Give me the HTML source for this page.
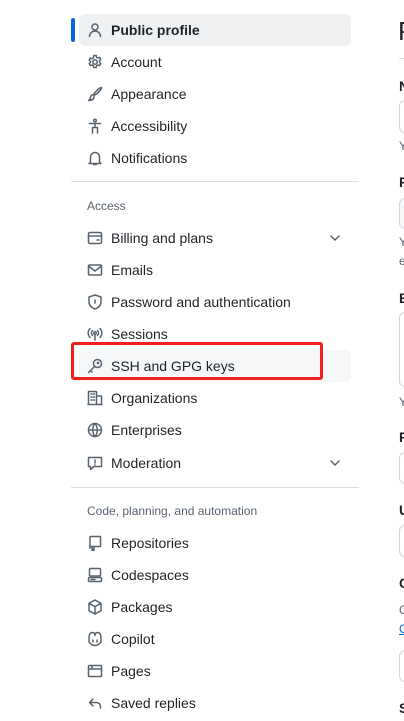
<!DOCTYPE html>
<html><head><meta charset="utf-8">
<style>
*{margin:0;padding:0;box-sizing:border-box}
body{width:404px;height:721px;overflow:hidden;background:#fff;font-family:"Liberation Sans",Arial,sans-serif;color:#1f2328;position:relative}
.item{position:absolute;left:79px;width:272px;height:32px;display:flex;align-items:center;font-size:14px}
.item svg{position:absolute;left:8px;top:8px;width:16px;height:16px;fill:none;stroke:#59636e;stroke-width:1.5;stroke-linecap:round;stroke-linejoin:round}
.item span{position:absolute;left:32px}
.chev{position:absolute;left:250px !important;top:10px !important;width:12px !important;height:12px !important}
.hdr{position:absolute;left:87px;font-size:12px;color:#59636e}
.div{position:absolute;left:71px;width:288px;height:1px;background:#d8dee4}
.r{position:absolute;left:399px;border:1px solid #d1d9e0;border-radius:6px;width:30px}
.l{position:absolute;left:399px;font-size:14px;font-weight:bold}
.s{position:absolute;left:399px;font-size:12px;color:#59636e}
</style></head><body>
<div style="position:absolute;left:71px;top:18px;width:4px;height:24px;background:#0969da;border-radius:2px"></div>
<div class="item" style="top:14px;background:#eef0f2;border-radius:6px;font-weight:bold"><svg viewBox="0 0 16 16"><circle cx="8" cy="5" r="3"/><path d="M2.5 14.5c0-3 2.5-5.5 5.5-5.5s5.5 2.5 5.5 5.5"/></svg><span>Public profile</span></div>
<div class="item" style="top:46px"><svg viewBox="0 0 16 16"><circle cx="8" cy="8" r="2.2"/><path d="M6.8 1.5h2.4l.4 1.8 1.3.7 1.7-.6 1.2 2.1-1.3 1.2v1.6l1.3 1.2-1.2 2.1-1.7-.6-1.3.7-.4 1.8H6.8l-.4-1.8-1.3-.7-1.7.6-1.2-2.1 1.3-1.2V7.4L2.2 6.2l1.2-2.1 1.7.6 1.3-.7z"/></svg><span>Account</span></div>
<div class="item" style="top:78px"><svg viewBox="0 0 16 16"><path d="M14.5 1.5c-2 0-6 4-7.5 6.5l1 1c2.5-1.5 6.5-5.5 6.5-7.5zM6.5 8.5c-2 0-3 1.5-3 3.5 0 1-1 2-2 2.5 3 0 5.5-1 5.5-4z"/></svg><span>Appearance</span></div>
<div class="item" style="top:110px"><svg viewBox="0 0 16 16"><circle cx="8" cy="2.5" r="1.3"/><path d="M2.5 5.5h11M8 5.5v4M5.5 15V9.5h5V15"/></svg><span>Accessibility</span></div>
<div class="item" style="top:142px"><svg viewBox="0 0 16 16"><path d="M3.5 12V7a4.5 4.5 0 019 0v5l1.5 1.5H2zM6.5 14.5h3"/></svg><span>Notifications</span></div>
<div class="div" style="top:181px"></div>
<div class="hdr" style="top:199px">Access</div>
<div class="item" style="top:222px"><svg viewBox="0 0 16 16"><rect x="1.5" y="2.5" width="13" height="11" rx="1.5"/><path d="M1.5 6h13M10 10h2"/></svg><span>Billing and plans</span><svg class="chev" viewBox="0 0 12 12"><path d="M2 4l4 4 4-4"/></svg></div>
<div class="item" style="top:254px"><svg viewBox="0 0 16 16"><rect x="1.5" y="3" width="13" height="10" rx="1"/><path d="M1.5 4l6.5 5 6.5-5"/></svg><span>Emails</span></div>
<div class="item" style="top:286px"><svg viewBox="0 0 16 16"><path d="M8 1l6 2v5c0 3.5-3 6-6 7-3-1-6-3.5-6-7V3z"/><path d="M8 6v3"/></svg><span>Password and authentication</span></div>
<div class="item" style="top:318px"><svg viewBox="0 0 16 16"><circle cx="8" cy="7" r="1.3"/><path d="M8 8.5V14M5.5 4.5a3.5 3.5 0 000 5M10.5 4.5a3.5 3.5 0 010 5M3 2.5a6.5 6.5 0 000 9M13 2.5a6.5 6.5 0 010 9"/></svg><span>Sessions</span></div>
<div class="item" style="top:350px;background:#f6f7f8;border-radius:6px"><svg viewBox="0 0 16 16"><circle cx="10.5" cy="5.5" r="4"/><path d="M7.5 8.5l-6 6M3.5 12.5l1.5 1.5"/><circle cx="11" cy="5" r=".6"/></svg><span>SSH and GPG keys</span></div>
<div style="position:absolute;left:71px;top:342px;width:252px;height:38px;border:3px solid #f02020;border-radius:3px"></div>
<div class="item" style="top:382px"><svg viewBox="0 0 16 16"><path d="M1.5 14.5V1.5h8v13M9.5 6h5v8.5M1 14.5h14M4 4h1M6.5 4h1M4 7h1M6.5 7h1M4 10h1M6.5 10h1"/></svg><span>Organizations</span></div>
<div class="item" style="top:414px"><svg viewBox="0 0 16 16"><circle cx="8" cy="8" r="6.5"/><path d="M1.5 8h13M8 1.5c-3 3.5-3 9.5 0 13M8 1.5c3 3.5 3 9.5 0 13"/></svg><span>Enterprises</span></div>
<div class="item" style="top:447px"><svg viewBox="0 0 16 16"><path d="M1.5 2.5h13v9H7l-3.5 3v-3h-2z"/><path d="M8 5v3M8 9.8v.1"/></svg><span>Moderation</span><svg class="chev" viewBox="0 0 12 12"><path d="M2 4l4 4 4-4"/></svg></div>
<div class="div" style="top:487px"></div>
<div class="hdr" style="top:504px">Code, planning, and automation</div>
<div class="item" style="top:527px"><svg viewBox="0 0 16 16"><path d="M3 13V2.5a1 1 0 011-1h9.5v10H4a1 1 0 00-1 1.5M5 11.5v4l1-1 1 1v-4"/></svg><span>Repositories</span></div>
<div class="item" style="top:559px"><svg viewBox="0 0 16 16"><rect x="2.5" y="1.5" width="11" height="7.5" rx="1"/><rect x="1.5" y="10.5" width="13" height="4" rx="1"/><path d="M4 12.5h4"/></svg><span>Codespaces</span></div>
<div class="item" style="top:591px"><svg viewBox="0 0 16 16"><path d="M8 1l6 3.3v7.4L8 15l-6-3.3V4.3zM2 4.3L8 7.6l6-3.3M8 7.6V15"/></svg><span>Packages</span></div>
<div class="item" style="top:623px"><svg viewBox="0 0 16 16"><path d="M2 7c0-4 1.5-5.5 3.5-5.5 1.5 0 2.5 1 2.5 3 0-2 1-3 2.5-3 2 0 3.5 1.5 3.5 5.5v4c-2 2.5-4 3.5-6 3.5s-4-1-6-3.5z"/><path d="M6 9v2M10 9v2"/></svg><span>Copilot</span></div>
<div class="item" style="top:655px"><svg viewBox="0 0 16 16"><rect x="1.5" y="2.5" width="13" height="11" rx="1"/><path d="M1.5 6h13M5 2.5V6"/></svg><span>Pages</span></div>
<div class="item" style="top:687px"><svg viewBox="0 0 16 16"><path d="M6 4L2.5 7.5 6 11M2.5 7.5h7a4 4 0 014 4v1.5"/></svg><span>Saved replies</span></div>

<div style="position:absolute;left:398px;top:16px;font-size:26px">P</div>
<div style="position:absolute;left:399px;top:58px;width:10px;height:1px;background:#d8dee4"></div>
<div class="l" style="top:78px">N</div>
<div class="r" style="top:100px;height:33px"></div>
<div class="s" style="top:139px">Y</div>
<div class="l" style="top:174px">P</div>
<div class="r" style="top:198px;height:31px;background:#f6f8fa"></div>
<div class="s" style="top:235px">Y</div>
<div class="s" style="top:254px">e</div>
<div class="l" style="top:290px">B</div>
<div class="r" style="top:312px;height:75px"></div>
<div class="s" style="top:395px">Y</div>
<div class="l" style="top:429px">P</div>
<div class="r" style="top:452px;height:32px"></div>
<div class="l" style="top:502px">U</div>
<div class="r" style="top:525px;height:32px"></div>
<div class="l" style="top:575px">C</div>
<div class="s" style="top:603px">C</div>
<div class="s" style="top:622px;color:#0969da;text-decoration:underline">C</div>
<div class="r" style="top:650px;height:32px"></div>
<div class="l" style="top:700px">S</div>
</body></html>
